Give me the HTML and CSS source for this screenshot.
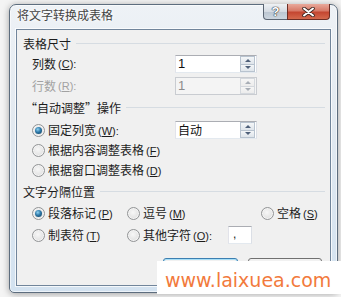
FILE: index.html
```html
<!DOCTYPE html>
<html lang="zh-CN">
<head>
<meta charset="utf-8">
<title>将文字转换成表格</title>
<link rel="stylesheet" href="styles.css">
</head>
<body>
<div class="window">
  <div class="titlebar">
    <span class="title">将文字转换成表格</span>
    <div class="caption-btns">
      <div class="cbtn help">?</div>
      <div class="cbtn close">
        <svg width="13" height="10" viewBox="0 0 13 10">
          <path d="M2 1.5 L11 8.5 M11 1.5 L2 8.5" stroke="#3b2520" stroke-width="3.6" stroke-linecap="round"/>
          <path d="M2 1.5 L11 8.5 M11 1.5 L2 8.5" stroke="#ffffff" stroke-width="2" stroke-linecap="round"/>
        </svg>
      </div>
    </div>
  </div>
  <div class="client">
    <div class="group-head h1">表格尺寸</div>
    <div class="row r1">
      <span class="lbl">列数<span class="mn">(<u>C</u>):</span></span>
      <div class="spin"><span class="val">1</span><div class="arrows"><span class="half"><i class="up"></i></span><span class="half"><i class="dn"></i></span></div></div>
    </div>
    <div class="row r2 disabled">
      <span class="lbl">行数<span class="mn">(<u>R</u>):</span></span>
      <div class="spin dis"><span class="val">1</span><div class="arrows"><span class="half"><i class="up"></i></span><span class="half"><i class="dn"></i></span></div></div>
    </div>
    <div class="group-head h2">“自动调整”操作</div>
    <div class="row r3">
      <span class="lbl"><span class="radio on"></span><span class="txt">固定列宽<span class="mn">(<u>W</u>):</span></span></span>
      <div class="spin"><span class="val cjk">自动</span><div class="arrows"><span class="half"><i class="up"></i></span><span class="half"><i class="dn"></i></span></div></div>
    </div>
    <div class="row r4">
      <span class="radio"></span><span class="txt">根据内容调整表格<span class="mn">(<u>F</u>)</span></span>
    </div>
    <div class="row r5">
      <span class="radio"></span><span class="txt">根据窗口调整表格<span class="mn">(<u>D</u>)</span></span>
    </div>
    <div class="group-head h3">文字分隔位置</div>
    <div class="opts r6">
      <div class="opt"><span class="radio on"></span><span class="txt">段落标记<span class="mn">(<u>P</u>)</span></span></div>
      <div class="opt"><span class="radio"></span><span class="txt">逗号<span class="mn">(<u>M</u>)</span></span></div>
      <div class="opt"><span class="radio"></span><span class="txt">空格<span class="mn">(<u>S</u>)</span></span></div>
    </div>
    <div class="opts r7">
      <div class="opt"><span class="radio"></span><span class="txt">制表符<span class="mn">(<u>T</u>)</span></span></div>
      <div class="opt"><span class="radio"></span><span class="txt wide">其他字符<span class="mn">(<u>O</u>):</span></span><span class="tiny">,</span></div>
    </div>
    <div class="buttons">
      <div class="btn default"></div>
      <div class="btn"></div>
    </div>
  </div>
</div>
<div class="watermark">www.laixuea.com</div>
</body>
</html>
```
FILE: styles.css
```css
* { box-sizing: border-box; }

html, body {
  margin: 0;
  padding: 0;
}

body {
  width: 341px;
  height: 297px;
  overflow: hidden;
  position: relative;
  background: #f4f4f4;
  font-family: "Noto Sans CJK SC", "Liberation Sans", sans-serif;
  font-size: 12px;
  line-height: 14px;
  color: #1c1c1c;
}

.window {
  margin: 4px 0 0 9px;
  width: 329px;
  height: 289px;
  border: 1px solid #5d6d7e;
  border-radius: 7px 7px 5px 5px;
  background: linear-gradient(#eef2f6 0%, #e2e9f0 40%, #d3e2f0 100%);
  box-shadow: 0 1px 7px rgba(0, 0, 0, 0.35), inset 0 0 0 1px rgba(255, 255, 255, 0.6);
  display: flex;
  flex-direction: column;
}

.titlebar {
  height: 24px;
  display: flex;
  align-items: flex-start;
  justify-content: space-between;
}

.title {
  margin: 3px 0 0 7px;
  color: #444444;
  font-size: 12px;
  line-height: 14px;
  text-shadow: 0 0 3px #ffffff, 0 0 5px #ffffff;
}

.caption-btns {
  display: flex;
  margin-top: -1px;
  margin-right: 7px;
}

.cbtn {
  height: 16px;
  border: 1px solid #5b6572;
  border-top: none;
  display: flex;
  align-items: center;
  justify-content: center;
}

.help {
  width: 25px;
  border-radius: 0 0 0 4px;
  background: linear-gradient(#eef1f4 0%, #d5dbe2 50%, #bcc6d1 55%, #cdd6df 100%);
  color: #ffffff;
  font-family: "Liberation Sans", sans-serif;
  font-weight: bold;
  font-size: 13px;
  line-height: 14px;
  text-shadow: 0 0 1px #2c3036, 0 0 1px #2c3036, 0 0 1px #2c3036;
}

.close {
  width: 43px;
  margin-left: -1px;
  border-color: #6d2d24;
  border-radius: 0 0 4px 0;
  background: linear-gradient(#e9a99b 0%, #d77a68 45%, #c44631 55%, #d4694d 100%);
}

.client {
  margin: 0 6px 6px 6px;
  height: 257px;
  border: 1px solid #71859b;
  background: #f0f0f0;
  box-shadow: 0 0 0 1px rgba(255, 255, 255, 0.75);
  padding: 3px 5px 0 0;
  display: flex;
  flex-direction: column;
}

.group-head {
  display: flex;
  align-items: center;
  padding-left: 6px;
  color: #1c1c1c;
}

.group-head::after {
  content: "";
  flex: 1;
  border-top: 1px solid #d6dce2;
  margin-left: 5px;
}

.h1 { height: 21px; }
.h2 { height: 19px; padding-left: 8px; }
.h3 { height: 17px; }

.row {
  display: flex;
  align-items: center;
  padding-left: 15px;
}

.r1 { height: 20px; }
.r2 { height: 24px; }
.r3 { height: 26px; }
.r4 { height: 15px; }
.r5 { height: 25px; }
.r6 { height: 26px; }
.r7 { height: 15px; }

.lbl {
  width: 143px;
  flex: none;
  display: flex;
  align-items: center;
}

.disabled .lbl { color: #a2a2a2; }

.mn {
  font-family: "Liberation Sans", sans-serif;
  font-size: 11px;
  margin-left: 2px;
}

.txt { margin-left: 3px; white-space: nowrap; }

.radio {
  width: 13px;
  height: 13px;
  flex: none;
  border-radius: 50%;
  border: 1px solid #929496;
  background: radial-gradient(circle at 45% 40%, #f7f7f7 0%, #e6e6e6 55%, #d6d6d6 100%);
  box-shadow: inset 0 0 0 1px #f4f4f4;
  position: relative;
}

.radio.on::after {
  content: "";
  position: absolute;
  left: 2px;
  top: 2px;
  width: 7px;
  height: 7px;
  border-radius: 50%;
  background: radial-gradient(circle at 40% 35%, #8fd3f3 0%, #2d78a8 45%, #0c3a58 100%);
}

.spin {
  width: 82px;
  height: 18px;
  flex: none;
  border: 1px solid #abadb3;
  border-left-color: #e2e3ea;
  border-right-color: #dbdfe6;
  border-bottom-color: #e3e9ef;
  background: #ffffff;
  display: flex;
}

.spin .val {
  flex: 1;
  padding-left: 2px;
  font-family: "Liberation Sans", sans-serif;
  font-size: 13px;
  line-height: 16px;
  color: #111111;
}

.spin .val.cjk {
  font-family: "Noto Sans CJK SC", sans-serif;
  font-size: 12px;
}

.arrows {
  width: 16px;
  display: flex;
  flex-direction: column;
  padding: 0 1px 0 0;
}

.half {
  flex: 1;
  display: flex;
  align-items: center;
  justify-content: center;
  border: 1px solid #b8c3cf;
  background: linear-gradient(#f4f6f8, #dfe5eb);
}

.half + .half { border-top: none; }

.up, .dn {
  width: 0;
  height: 0;
  border-left: 3px solid transparent;
  border-right: 3px solid transparent;
}

.up { border-bottom: 3px solid #4f607a; }
.dn { border-top: 3px solid #4f607a; }

.spin.dis {
  border-color: #c9ccd1;
  background: #f4f4f4;
}

.spin.dis .val { color: #8c8c8c; }
.spin.dis .half { border-color: #d4d8dd; background: linear-gradient(#f6f6f6, #ececec); }
.spin.dis .up { border-bottom-color: #a8aeb6; }
.spin.dis .dn { border-top-color: #a8aeb6; }

.opts {
  display: grid;
  grid-template-columns: 95px 134px auto;
  align-items: center;
  padding-left: 15px;
}

.opt {
  display: flex;
  align-items: center;
}

.txt.wide { width: 85px; }

.tiny {
  width: 24px;
  height: 18px;
  border: 1px solid #abadb3;
  border-left-color: #e2e3ea;
  border-right-color: #dbdfe6;
  border-bottom-color: #e3e9ef;
  background: #ffffff;
  font-family: "Liberation Sans", sans-serif;
  font-size: 12px;
  line-height: 14px;
  padding-left: 4px;
}

.buttons {
  margin-top: 17px;
  display: flex;
  justify-content: flex-end;
  gap: 10px;
  padding-right: 3px;
}

.btn {
  width: 75px;
  height: 23px;
  border: 1px solid #707070;
  border-radius: 3px;
  background: linear-gradient(#f2f2f2 0%, #ebebeb 50%, #dddddd 51%, #cfcfcf 100%);
}

.btn + .btn { width: 74px; }

.btn.default {
  border-color: #3c7fb1;
  box-shadow: inset 0 0 0 1px #a8e0f8;
}

.watermark {
  position: absolute;
  left: 157px;
  top: 261px;
  width: 184px;
  height: 33px;
  background: #ffffff;
  padding: 10px 0 0 8px;
  font-family: "DejaVu Sans", sans-serif;
  font-size: 19px;
  line-height: 19px;
  color: #f27a3c;
  white-space: nowrap;
}
```
